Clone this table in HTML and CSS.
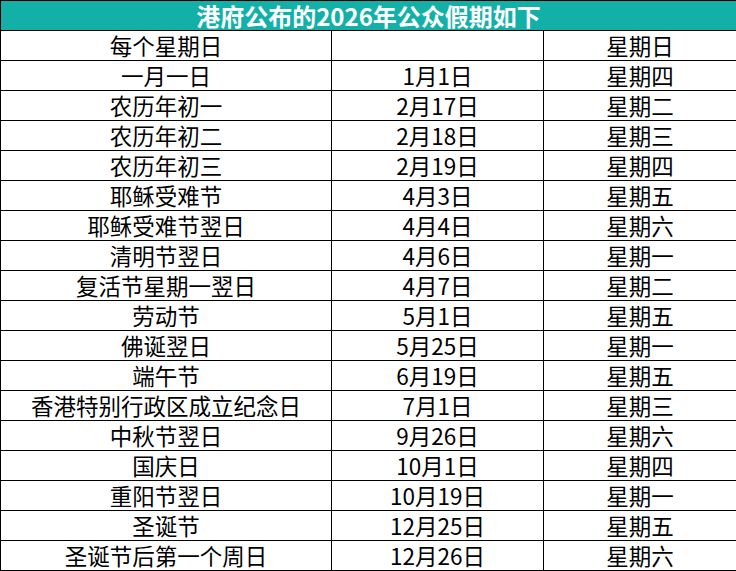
FILE: index.html
```html
<!DOCTYPE html>
<html lang="zh-CN">
<head>
<meta charset="utf-8">
<title>港府公布的2026年公众假期如下</title>
<link rel="stylesheet" href="styles.css">
</head>
<body>
<table class="holidays">
  <colgroup>
    <col class="c1"><col class="c2"><col class="c3">
  </colgroup>
  <thead>
    <tr><th colspan="3">港府公布的2026年公众假期如下</th></tr>
  </thead>
  <tbody>
    <tr><td>每个星期日</td><td></td><td>星期日</td></tr>
    <tr><td>一月一日</td><td>1月1日</td><td>星期四</td></tr>
    <tr><td>农历年初一</td><td>2月17日</td><td>星期二</td></tr>
    <tr><td>农历年初二</td><td>2月18日</td><td>星期三</td></tr>
    <tr><td>农历年初三</td><td>2月19日</td><td>星期四</td></tr>
    <tr><td>耶稣受难节</td><td>4月3日</td><td>星期五</td></tr>
    <tr><td>耶稣受难节翌日</td><td>4月4日</td><td>星期六</td></tr>
    <tr><td>清明节翌日</td><td>4月6日</td><td>星期一</td></tr>
    <tr><td>复活节星期一翌日</td><td>4月7日</td><td>星期二</td></tr>
    <tr><td>劳动节</td><td>5月1日</td><td>星期五</td></tr>
    <tr><td>佛诞翌日</td><td>5月25日</td><td>星期一</td></tr>
    <tr><td>端午节</td><td>6月19日</td><td>星期五</td></tr>
    <tr><td>香港特别行政区成立纪念日</td><td>7月1日</td><td>星期三</td></tr>
    <tr><td>中秋节翌日</td><td>9月26日</td><td>星期六</td></tr>
    <tr><td>国庆日</td><td>10月1日</td><td>星期四</td></tr>
    <tr><td>重阳节翌日</td><td>10月19日</td><td>星期一</td></tr>
    <tr><td>圣诞节</td><td>12月25日</td><td>星期五</td></tr>
    <tr><td>圣诞节后第一个周日</td><td>12月26日</td><td>星期六</td></tr>
  </tbody>
</table>
</body>
</html>
```

FILE: styles.css
```css
html, body {
  margin: 0;
  padding: 0;
  background: #ffffff;
}

.holidays {
  width: 736px;
  border-collapse: collapse;
  table-layout: fixed;
  font-family: "Noto Sans CJK SC", "Noto Sans", sans-serif;
  color: #000000;
}

.c1 { width: 331px; }
.c2 { width: 212px; }
.c3 { width: 193px; }

.holidays th,
.holidays td {
  border: 1px solid #000000;
  padding: 0;
  height: 29px;
  text-align: center;
  vertical-align: middle;
  line-height: 29px;
  white-space: nowrap;
}

.holidays th {
  background: #13b0a7;
  color: #ffffff;
  font-size: 24px;
  font-weight: 700;
}

.holidays td {
  font-size: 22.5px;
  font-weight: 400;
}
```
